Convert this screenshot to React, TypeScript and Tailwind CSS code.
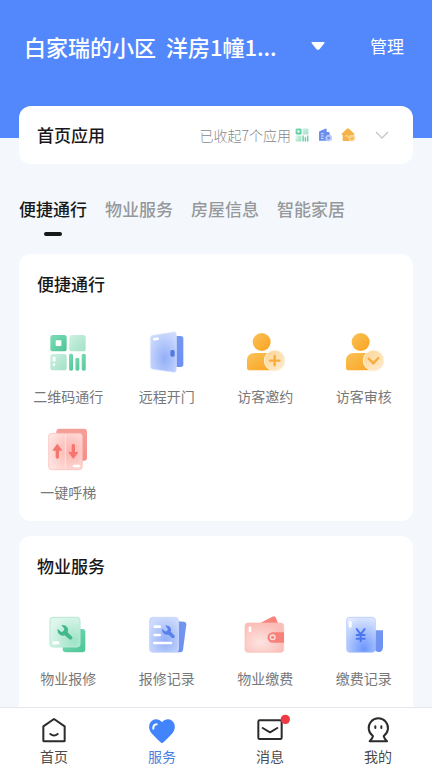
// src/App.tsx
import type { ReactNode } from "react";

/* Shared gradients, referenced by id from every icon */
function IconDefs() {
  return (
    <svg className="absolute h-0 w-0" aria-hidden="true">
      <defs>
        <linearGradient id="green" x1="0" y1="0" x2="1" y2="1">
          <stop offset="0" stopColor="#7fdcb7" />
          <stop offset="1" stopColor="#4cc596" />
        </linearGradient>
        <linearGradient id="greenPale" x1="0" y1="0" x2="1" y2="1">
          <stop offset="0" stopColor="#cdf1e2" />
          <stop offset="1" stopColor="#a3e0c8" />
        </linearGradient>
        <radialGradient id="greenGlass" cx="0.8" cy="0.8" r="0.9">
          <stop offset="0" stopColor="#9de3c7" />
          <stop offset="1" stopColor="#dff6ed" />
        </radialGradient>
        <linearGradient id="blue" x1="0" y1="0" x2="0" y2="1">
          <stop offset="0" stopColor="#7596ee" />
          <stop offset="1" stopColor="#6c90f4" />
        </linearGradient>
        <radialGradient id="blueGlass" cx="0.55" cy="0.65" r="0.65">
          <stop offset="0" stopColor="#93aff9" />
          <stop offset="1" stopColor="#cbd9fc" />
        </radialGradient>
        <radialGradient id="blueDeep" cx="0.6" cy="0.9" r="0.95">
          <stop offset="0" stopColor="#6d97fd" />
          <stop offset="1" stopColor="#e0e9fe" />
        </radialGradient>
        <linearGradient id="orange" x1="0" y1="0" x2="1" y2="1">
          <stop offset="0" stopColor="#f9c258" />
          <stop offset="1" stopColor="#fba31f" />
        </linearGradient>
        <linearGradient id="orangeGlass" x1="0" y1="0" x2="1" y2="1">
          <stop offset="0" stopColor="#fcd592" />
          <stop offset="1" stopColor="#fdecd2" />
        </linearGradient>
        <linearGradient id="red" x1="0" y1="0" x2="0" y2="1">
          <stop offset="0" stopColor="#f5a09a" />
          <stop offset="1" stopColor="#f78d87" />
        </linearGradient>
        <radialGradient id="redGlass" cx="0.65" cy="0.5" r="0.7">
          <stop offset="0" stopColor="#fbb2ad" />
          <stop offset="1" stopColor="#fee3e0" />
        </radialGradient>
        <radialGradient id="walletGlass" cx="0.4" cy="0.65" r="0.65">
          <stop offset="0" stopColor="#fde3e0" />
          <stop offset="1" stopColor="#fbbdb8" />
        </radialGradient>
      </defs>
    </svg>
  );
}

function QrShapes() {
  return (
    <>
      <rect x="19" y="21" width="49" height="49" rx="8" fill="url(#green)" />
      <rect x="35" y="37" width="17" height="17" rx="2" fill="#fff" />
      <rect x="76" y="21" width="49" height="49" rx="8" fill="url(#greenPale)" />
      <rect x="19" y="78" width="49" height="49" rx="8" fill="url(#greenPale)" />
      <rect x="26" y="86" width="9" height="15" rx="4" fill="#fff" />
      <circle cx="30" cy="110" r="4" fill="#fff" />
      <rect x="75" y="77" width="12" height="51" rx="5" fill="url(#green)" />
      <rect x="94" y="89" width="12" height="39" rx="5" fill="url(#green)" />
      <rect x="113" y="77" width="12" height="51" rx="5" fill="url(#green)" />
    </>
  );
}

function DoorShapes() {
  return (
    <>
      <path d="M96 24h17q8 0 8 8v77q0 8-8 8H96z" fill="url(#blue)" />
      <path
        d="M30 22L92 12q8-1 8 7v107q0 8-8 7L30 124q-8-1-8-9V31q0-8 8-9z"
        fill="url(#blueGlass)"
        stroke="#dfe7fd"
        strokeWidth="2"
      />
      <rect x="82" y="66" width="13" height="20" rx="5" fill="#5578e0" />
      <rect x="30" y="29" width="18" height="8" rx="4" fill="#fff" transform="rotate(-8 39 33)" />
    </>
  );
}

function VisitorShapes({ mark }: { mark: string }) {
  return (
    <>
      <circle cx="62" cy="42" r="27" fill="url(#orange)" />
      <path d="M42 75h38q22 0 22 22v30H26q-8 0-8-8V99q0-24 24-24z" fill="url(#orange)" />
      <circle cx="101" cy="98" r="31" fill="url(#orangeGlass)" stroke="#fef3df" strokeWidth="3" />
      <path d={mark} fill="none" stroke="#f9ac3b" strokeWidth="7" strokeLinecap="round" strokeLinejoin="round" />
    </>
  );
}

function LiftShapes() {
  return (
    <>
      <rect x="37" y="14" width="92" height="96" rx="9" fill="url(#red)" />
      <rect x="14" y="28" width="101" height="109" rx="9" fill="url(#redGlass)" stroke="#f9b9b4" strokeWidth="2" />
      <path d="M64 30v105" stroke="#fde5e2" strokeWidth="3" />
      <path d="M40 59l14 19q1 2-2 2h-7v20q0 4-5 4t-5-4V80h-7q-3 0-2-2z" fill="#f4766f" />
      <path d="M88 105l14-19q1-2-2-2h-7V64q0-4-5-4t-5 4v20h-7q-3 0-2 2z" fill="#f4766f" />
      <rect x="86" y="122" width="22" height="8" rx="4" fill="#fff" />
    </>
  );
}

function Wrench({ color }: { color: string }) {
  return (
    <>
      <path
        d="M52 45q12-2 18 7 4 7 1 15l13 13q3 4 0 7t-8 1L62 76q-10 3-17-4-6-7-4-16l10 9q3 2 6-1l3-3q2-3 0-6z"
        fill={color}
      />
    </>
  );
}

function RepairShapes() {
  return (
    <>
      <rect x="56" y="57" width="68" height="70" rx="10" fill="url(#green)" />
      <rect x="18" y="22" width="90" height="89" rx="9" fill="url(#greenGlass)" stroke="#b5e8d4" strokeWidth="3" />
      <Wrench color="#43b88a" />
      <rect x="26" y="94" width="20" height="9" rx="4" fill="#fff" />
    </>
  );
}

function RecordShapes() {
  return (
    <>
      <path d="M96 33l27 2q7 1 7 8l-10 77q-1 7-8 7H96z" fill="url(#blue)" />
      <rect x="20" y="22" width="86" height="105" rx="9" fill="url(#blueGlass)" stroke="#cddafc" strokeWidth="3" />
      <path d="M35 50h15M35 75h15M34 99h50" stroke="#fff" strokeWidth="8" strokeLinecap="round" />
      <g transform="translate(22 8) scale(.86)">
        <Wrench color="#5a80ea" />
      </g>
    </>
  );
}

function WalletShapes() {
  return (
    <>
      <path d="M52 42L94 20q8-4 11 4l7 18z" fill="#f8837b" />
      <rect x="12" y="39" width="116" height="88" rx="9" fill="url(#walletGlass)" stroke="#fbbcb7" strokeWidth="2" />
      <path d="M95 67h34v31H95a15 15 0 0 1 0-31z" fill="#f8827b" />
      <circle cx="95" cy="82" r="7" fill="#f8827b" stroke="#fde0dd" strokeWidth="4" />
      <rect x="23" y="49" width="8" height="18" rx="4" fill="#fff" />
    </>
  );
}

function BillShapes() {
  return (
    <>
      <path d="M107 61h22v50q-1 15-12 15t-13-9z" fill="url(#blue)" />
      <rect x="20" y="22" width="86" height="105" rx="9" fill="url(#blueDeep)" stroke="#a9c1fd" strokeWidth="2" />
      <path
        d="M50 57l12 16 12-16M62 73v21M50 75h24M50 86h24"
        fill="none"
        stroke="#4b76ee"
        strokeWidth="6"
        strokeLinecap="round"
      />
      <rect x="27" y="33" width="8" height="20" rx="4" fill="#fff" />
    </>
  );
}

interface AppItem {
  title: string;
  icon: ReactNode;
}

interface AppSection {
  title: string;
  items: AppItem[];
}

const TABS = ["便捷通行", "物业服务", "房屋信息", "智能家居"];

const SECTIONS: AppSection[] = [
  {
    title: "便捷通行",
    items: [
      { title: "二维码通行", icon: <QrShapes /> },
      { title: "远程开门", icon: <DoorShapes /> },
      { title: "访客邀约", icon: <VisitorShapes mark="M87 98h28M101 84v28" /> },
      { title: "访客审核", icon: <VisitorShapes mark="M86 92l14 14 15-16" /> },
      { title: "一键呼梯", icon: <LiftShapes /> },
    ],
  },
  {
    title: "物业服务",
    items: [
      { title: "物业报修", icon: <RepairShapes /> },
      { title: "报修记录", icon: <RecordShapes /> },
      { title: "物业缴费", icon: <WalletShapes /> },
      { title: "缴费记录", icon: <BillShapes /> },
    ],
  },
];

const NAV_ITEMS = [
  {
    title: "首页",
    active: false,
    icon: (
      <g fill="none" stroke="#2b2b2e" strokeWidth="6" strokeLinecap="round" strokeLinejoin="round">
        <path d="M10 31L42 9l32 22v43q0 2-2 2H12q-2 0-2-2z" />
        <path d="M31 54q11 9 22 0" />
      </g>
    ),
  },
  {
    title: "服务",
    active: true,
    icon: (
      <>
        <path
          d="M42 82Q37 80 10 51C-3 35 4 10 25 10q10 0 17 8 7-8 17-8c21 0 28 25 15 41Q47 80 42 82z"
          fill="#4284fb"
        />
        <path d="M16 38q-1-12 10-13" fill="none" stroke="#fff" strokeWidth="6" strokeLinecap="round" />
      </>
    ),
  },
  {
    title: "消息",
    active: false,
    icon: (
      <>
        <g fill="none" stroke="#2b2b2e" strokeWidth="6" strokeLinecap="round" strokeLinejoin="round">
          <rect x="7" y="13" width="70" height="56" rx="4" />
          <path d="M20 36l22 13 22-13" />
        </g>
        <circle cx="88" cy="10" r="14" fill="#ee3a43" />
      </>
    ),
  },
  {
    title: "我的",
    active: false,
    icon: (
      <g fill="none" stroke="#2b2b2e" strokeWidth="6" strokeLinecap="round" strokeLinejoin="round">
        <path d="M27 60A29 29 0 1 1 59 60q2 9 10 16H17q8-7 10-16z" />
        <path d="M34 31v5M52 31v5" />
      </g>
    ),
  },
];

function SectionCard({ section }: { section: AppSection }) {
  return (
    <section className="rounded-xl bg-white pt-[18px] pb-[17px] last:pb-8">
      <h2 className="px-[18px] text-[17px] leading-6 font-medium text-[#17181a]">{section.title}</h2>
      <ul className="mt-8 grid grid-cols-4 gap-y-4">
        {section.items.map((item) => (
          <li key={item.title}>
            <button type="button" className="flex w-full flex-col items-center gap-2">
              <svg viewBox="0 0 144 144" className="size-12" aria-hidden="true">
                {item.icon}
              </svg>
              <span className="text-[14px] leading-6 whitespace-nowrap text-[#77787a]">{item.title}</span>
            </button>
          </li>
        ))}
      </ul>
    </section>
  );
}

export default function App() {
  return (
    <div className="relative flex h-dvh flex-col bg-[#f4f8fc] font-['Noto_Sans_CJK_SC',sans-serif]">
      <IconDefs />
      <div className="flex-1 overflow-y-auto [scrollbar-width:none]">
        {/* Header */}
        <header className="flex h-[138px] items-start bg-[#5288fc] pt-[30px] pr-7 pl-6 text-white">
          <button type="button" className="flex items-center gap-[34px] text-left">
            <span className="text-[22px] leading-8 font-medium whitespace-pre">白家瑞的小区{"  "}洋房1幢1...</span>
            <svg viewBox="0 0 14 8" className="h-2 w-3.5" aria-hidden="true">
              <path d="M1.5 0h11q1.5 0 1 1l-5 6.200q-1.500 1.300-3 0L.5 1Q0 0 1.500 0z" fill="#fff" />
            </svg>
          </button>
          <button type="button" className="ml-auto text-[17px] leading-8">
            管理
          </button>
        </header>

        <main className="relative -mt-8 px-[19px] pb-4">
          {/* Collapsed home apps */}
          <button type="button" className="flex h-[58px] w-full items-center rounded-xl bg-white pr-6 pl-[18px]">
            <span className="text-[17px] font-medium text-[#17181a]">首页应用</span>
            <span className="ml-auto text-[14px] font-light text-[#88898c]">已收起7个应用</span>
            <span className="ml-1 flex gap-[9px]">
              <svg viewBox="14 16 116 116" className="size-3.5" aria-hidden="true">
                <QrShapes />
              </svg>
              <svg viewBox="0 0 42 42" className="size-3.5" aria-hidden="true">
                <path d="M3 13q0-3 3-4l16-7q4-1 4 3v7h6q3 0 3 3v23H3z" fill="#6b8deb" />
                <path d="M9 17h8M9 24h8M9 31h8" stroke="#d9e3fd" strokeWidth="3" />
                <circle cx="32" cy="30" r="10" fill="#b5c8fb" />
                <circle cx="32" cy="30" r="4" fill="#6f91f0" />
              </svg>
              <svg viewBox="0 0 42 42" className="size-3.5" aria-hidden="true">
                <path d="M18 2q3-3 6 0l16 15q2 3-2 3h-1v19H5V20H3q-3 0-1-3z" fill="#f5b347" />
                <path d="M13 26l4-5 5 8 4-5" fill="none" stroke="#fde3b4" strokeWidth="3" />
                <circle cx="32" cy="30" r="10" fill="#fbd08a" />
                <path d="M28 30l4 4 5-6" fill="none" stroke="#f09f2c" strokeWidth="3" />
              </svg>
            </span>
            <svg viewBox="0 0 14 8" className="ml-5 h-2 w-3.5" aria-hidden="true">
              <path d="M1 1l6 6 6-6" fill="none" stroke="#c6c7ca" strokeWidth="1.3" />
            </svg>
          </button>

          {/* Category tabs */}
          <nav className="mt-[33px] flex gap-[18px]">
            {TABS.map((tab, index) => (
              <button
                key={tab}
                type="button"
                className={
                  index === 0
                    ? "flex flex-col items-center gap-[11px] text-[17px] leading-6 font-medium text-[#17181a]"
                    : "flex flex-col items-center text-[17px] leading-6 font-medium text-[#96999c]"
                }
              >
                {tab}
                {index === 0 && <span className="h-1 w-[18px] rounded-full bg-[#17181a]" />}
              </button>
            ))}
          </nav>

          <div className="mt-[18px] space-y-[15px]">
            {SECTIONS.map((section) => (
              <SectionCard key={section.title} section={section} />
            ))}
          </div>
        </main>
      </div>

      {/* Bottom navigation */}
      <nav className="grid h-[61px] shrink-0 grid-cols-4 border-t border-[#e6e7ee] bg-white">
        {NAV_ITEMS.map((item) => (
          <a key={item.title} href="#" className="flex flex-col items-center pt-2">
            <svg viewBox="0 0 84 84" className="size-7 overflow-visible" aria-hidden="true">
              {item.icon}
            </svg>
            <span className={item.active ? "text-[14px] leading-6 text-[#4a80dd]" : "text-[14px] leading-6 text-[#4a4b4d]"}>
              {item.title}
            </span>
          </a>
        ))}
      </nav>
    </div>
  );
}
